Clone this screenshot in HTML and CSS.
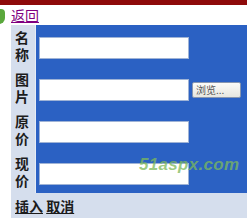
FILE: index.html
```html
<!DOCTYPE html>
<html lang="zh">
<head>
  <meta charset="UTF-8">
  <title>添加商品</title>
  <link rel="stylesheet" href="styles.css">
</head>
<body>

  <div class="topbar"></div>

  <!-- decoration from the page background -->
  <div class="leaf"></div>

  <div class="page">
    <a class="back" href="#">返回</a>

    <table class="form">
      <tr>
        <td class="label">名称</td>
        <td class="field"><input type="text" name="name"></td>
      </tr>
      <tr>
        <td class="label">图片</td>
        <td class="field"><input type="text" name="pic"><button type="button" class="browse">浏览...</button></td>
      </tr>
      <tr>
        <td class="label">原价</td>
        <td class="field"><input type="text" name="price"></td>
      </tr>
      <tr>
        <td class="label">现价</td>
        <td class="field"><input type="text" name="nowprice"></td>
      </tr>
      <tr class="actions">
        <td colspan="2"><a href="#">插入</a> <a href="#">取消</a></td>
      </tr>
    </table>
  </div>

  <div class="watermark">51aspx.com</div>

</body>
</html>
```

FILE: styles.css
```css
body {
  margin: 0;
  padding: 0;
  font-family: "Noto Sans CJK SC", "DejaVu Sans", sans-serif;
  background: #fff;
  overflow: hidden;
  position: relative;
  height: 222px;
}

.topbar {
  height: 5px;
  background: #8e0a0a;
}

.leaf {
  position: absolute;
  left: -7px;
  top: 9px;
  width: 12px;
  height: 15px;
  background: #5aa83c;
  border-radius: 0 4px 6px 0;
}

.page {
  padding-left: 11px;
}

.back {
  display: block;
  height: 20px;
  font-size: 14px;
  line-height: 21px;
  color: #800080;
  text-decoration: underline;
  width: 30px;
}

.form {
  border-collapse: collapse;
  width: 236px;
}

.form td {
  padding: 0;
}

.label {
  width: 20px;
  padding-left: 4px !important;
  background: #d5deed;
  font-size: 14px;
  font-weight: bold;
  line-height: 17px;
  color: #1c1c1c;
  height: 42px;
  border-right: 1px solid #e6ecf6;
}

.field {
  background: #2b61c3;
  vertical-align: middle;
}

.field input {
  box-sizing: border-box;
  width: 150px;
  height: 22px;
  margin: 0 0 0 3px;
  border: 1px solid #9fb3d6;
  background: #fff;
  vertical-align: middle;
}

.browse {
  box-sizing: border-box;
  width: 49px;
  height: 16px;
  margin-left: 3px;
  padding: 0 0 0 3px;
  border: 1px solid #8796b0;
  border-radius: 2px;
  background: linear-gradient(#fbfbf8, #e6e6e0);
  font-family: "Noto Sans CJK SC", sans-serif;
  font-size: 10px;
  line-height: 14px;
  color: #555;
  text-align: left;
  vertical-align: middle;
}

.actions td {
  height: 25px;
  background: #d5deed;
  padding-left: 4px;
  font-size: 14px;
  font-weight: bold;
}

.actions a {
  color: #1c1c1c;
  text-decoration: underline;
}

.watermark {
  position: absolute;
  left: 139px;
  top: 155px;
  font-family: "Liberation Sans", sans-serif;
  font-size: 17px;
  font-weight: bold;
  font-style: italic;
  letter-spacing: 0.3px;
  color: rgba(125, 185, 90, 0.75);
}
```
